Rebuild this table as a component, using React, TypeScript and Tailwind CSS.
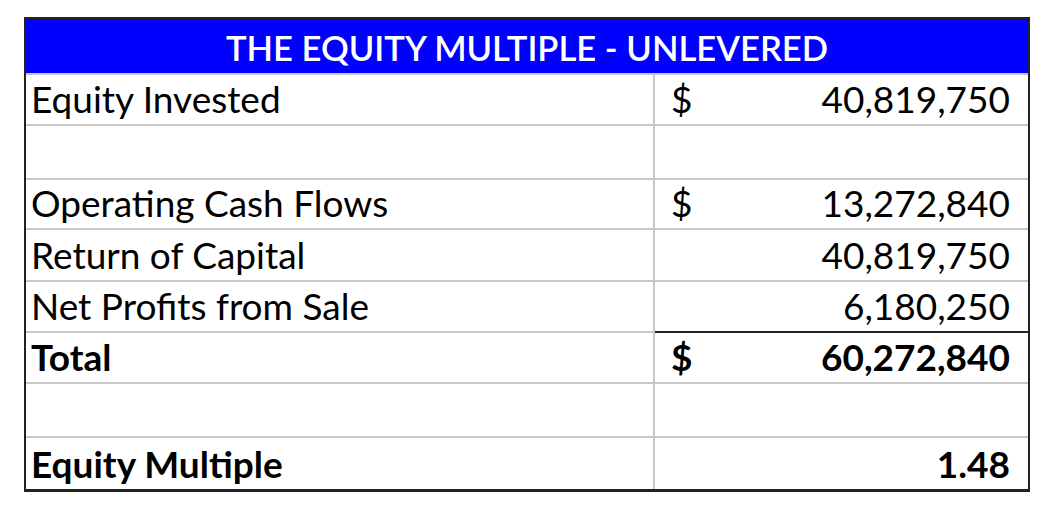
const rows = [
  { label: "Equity Invested", dollar: true, value: "40,819,750", h: "h-[51px]" },
  { label: "", dollar: false, value: "", h: "h-[54px]" },
  { label: "Operating Cash Flows", dollar: true, value: "13,272,840", h: "h-[50px]" },
  { label: "Return of Capital", dollar: false, value: "40,819,750", h: "h-[52px]" },
  { label: "Net Profits from Sale", dollar: false, value: "6,180,250", h: "h-[51px]", darkLine: true },
  { label: "Total", dollar: true, value: "60,272,840", h: "h-[51px]", bold: true },
  { label: "", dollar: false, value: "", h: "h-[54px]" },
  { label: "Equity Multiple", dollar: false, value: "1.48", h: "h-[51px]", bold: true, last: true },
];

export default function App() {
  return (
    <div
      className="min-h-screen bg-white pt-[17px] pl-[24px] text-black"
      style={{ fontFamily: "Lato, 'Liberation Sans', sans-serif" }}
    >
      <div className="w-[1006px] border-2 border-b-[3px] border-[#222]">
        {/* Title bar */}
        <div className="h-[56px] bg-[#0000ff] border-b-2 border-[#c8c8c8] flex items-center justify-center pt-[4px] text-white text-[34.6px] leading-none font-semibold">
          THE EQUITY MULTIPLE - UNLEVERED
        </div>

        {rows.map((r, i) => (
          <div key={i} className={`flex ${r.h} text-[37px] leading-[37px] ${r.bold ? "font-bold" : ""}`}>
            <div
              className={`w-[629px] flex items-end pl-[5px] pb-[7px] border-r-2 border-[#c8c8c8] ${
                r.last ? "" : "border-b-2"
              }`}
            >
              {r.label}
            </div>
            <div
              className={`flex-1 flex items-end justify-between pl-[16px] pr-[18px] pb-[7px] ${
                r.last ? "" : r.darkLine ? "border-b-2 border-[#222]" : "border-b-2 border-[#c8c8c8]"
              }`}
            >
              <span>{r.dollar ? "$" : ""}</span>
              <span>{r.value}</span>
            </div>
          </div>
        ))}
      </div>
    </div>
  );
}
